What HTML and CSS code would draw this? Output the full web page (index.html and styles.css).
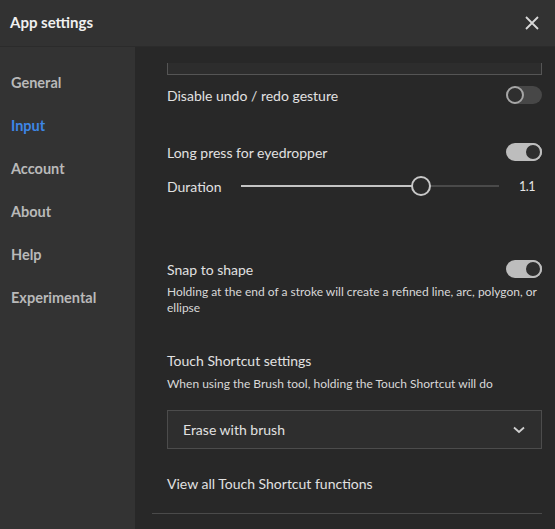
FILE: index.html
```html
<!DOCTYPE html>
<html lang="en">
<head>
    <meta charset="UTF-8">
    <title>App settings</title>
    <link rel="stylesheet" href="styles.css">
</head>
<body>
    <div class="dialog">
        <header class="dialog-header">
            <h1>App settings</h1>
            <button class="close-btn" aria-label="Close">
                <svg width="14" height="14" viewBox="0 0 14 14"><path d="M1 1 L13 13 M13 1 L1 13" stroke="#d8d8d8" stroke-width="1.8" fill="none"/></svg>
            </button>
        </header>

        <div class="dialog-body">
            <nav class="side-nav">
                <a class="nav-item">General</a>
                <a class="nav-item active">Input</a>
                <a class="nav-item">Account</a>
                <a class="nav-item">About</a>
                <a class="nav-item">Help</a>
                <a class="nav-item">Experimental</a>
            </nav>

            <main class="settings">
                <div class="clipped-field"></div>

                <div class="setting-row row-undo">
                    <span class="label">Disable undo / redo gesture</span>
                    <span class="toggle"></span>
                </div>

                <div class="setting-row row-eyedropper">
                    <span class="label">Long press for eyedropper</span>
                    <span class="toggle on"></span>
                </div>

                <div class="slider-row">
                    <span class="label">Duration</span>
                    <div class="slider">
                        <div class="slider-fill"></div>
                        <div class="slider-thumb"></div>
                    </div>
                    <span class="slider-value">1.1</span>
                </div>

                <div class="setting-row row-snap">
                    <span class="label">Snap to shape</span>
                    <span class="toggle on"></span>
                </div>
                <p class="description">Holding at the end of a stroke will create a refined line, arc, polygon, or ellipse</p>

                <div class="section-title">Touch Shortcut settings</div>
                <p class="description">When using the Brush tool, holding the Touch Shortcut will do</p>

                <div class="dropdown">
                    <span>Erase with brush</span>
                    <svg width="12" height="8" viewBox="0 0 12 8"><path d="M1 1.5 L6 6 L11 1.5" stroke="#d0d0d0" stroke-width="1.8" fill="none"/></svg>
                </div>

                <div class="link">View all Touch Shortcut functions</div>

                <hr class="divider">
            </main>
        </div>
    </div>
</body>
</html>
```

FILE: styles.css
```css
:root {
    --header-bg: #323232;
    --side-bg: #333333;
    --main-bg: #282828;
    --text: #e1e1e1;
    --text-muted: #b9b9b9;
    --accent: #3d86e6;
    --border: #4f4f4f;
    --font: "Lato", "Noto Sans", sans-serif;
}

html, body {
    margin: 0;
    height: 100%;
}

body {
    font-family: var(--font);
    background: var(--main-bg);
    color: var(--text);
    overflow: hidden;
}

.dialog {
    display: flex;
    flex-direction: column;
    height: 529px;
}

.dialog-header {
    height: 46px;
    background: var(--header-bg);
    border-bottom: 1px solid #2b2b2b;
    display: flex;
    align-items: center;
    justify-content: space-between;
    padding: 0 16px 0 10px;
    flex-shrink: 0;
}

.dialog-header h1 {
    margin: 0 0 2px;
    font-size: 15px;
    font-weight: 700;
    color: #f0f0f0;
}

.close-btn {
    background: none;
    border: none;
    padding: 0;
    width: 14px;
    height: 14px;
    display: flex;
}

.dialog-body {
    flex: 1;
    display: flex;
    min-height: 0;
}

/* left navigation */
.side-nav {
    width: 135px;
    background: var(--side-bg);
    display: flex;
    flex-direction: column;
    padding-top: 27px;
    flex-shrink: 0;
}

.nav-item {
    font-size: 14.5px;
    font-weight: 700;
    color: var(--text-muted);
    height: 43px;
    line-height: 18px;
    padding-left: 11px;
}

.nav-item.active {
    color: var(--accent);
}

/* settings list */
.settings {
    flex: 1;
    padding: 0 13px 0 32px;
    display: flex;
    flex-direction: column;
}

.clipped-field {
    margin-top: 16px;
    height: 11px;
    background: #2d2d2d;
    border: 1px solid #555;
    border-top: none;
}

.setting-row {
    display: flex;
    align-items: center;
    justify-content: space-between;
    height: 18px;
}

.row-undo { margin-top: 11px; }
.row-eyedropper { margin-top: 39px; }
.row-snap { margin-top: 64px; }

.label {
    font-size: 14px;
    color: var(--text);
}

.toggle {
    width: 36px;
    height: 18px;
    border-radius: 9px;
    background: #474747;
    position: relative;
    box-sizing: border-box;
}

.toggle::after {
    content: '';
    position: absolute;
    top: 0;
    left: 0;
    width: 18px;
    height: 18px;
    box-sizing: border-box;
    border-radius: 50%;
    border: 2px solid #a6a6a6;
    background: #2f2f2f;
}

.toggle.on {
    background: #bdbdbd;
}

.toggle.on::after {
    left: 18px;
    border-color: #bdbdbd;
    background: #2e2e2e;
}

.slider-row {
    display: flex;
    align-items: center;
    height: 20px;
    margin-top: 15px;
}

.slider-row .label {
    width: 74px;
}

.slider {
    position: relative;
    width: 258px;
    height: 2px;
    background: #4a4a4a;
}

.slider-fill {
    width: 180px;
    height: 2px;
    background: #c4c4c4;
}

.slider-thumb {
    position: absolute;
    left: 170px;
    top: -9px;
    width: 20px;
    height: 20px;
    box-sizing: border-box;
    border-radius: 50%;
    border: 2px solid #c8c8c8;
    background: #2a2a2a;
}

.slider-value {
    margin-left: 20px;
    font-size: 12.5px;
    letter-spacing: -0.5px;
    color: #e6e6e6;
}

.description {
    margin: 6px 0 0;
    font-size: 12px;
    line-height: 16px;
    color: #d8d8d8;
}

.section-title {
    margin-top: 36px;
    font-size: 14px;
    line-height: 18px;
}

.dropdown {
    margin-top: 18px;
    height: 37px;
    border: 1px solid #4c4c4c;
    background: #2e2e2e;
    display: flex;
    align-items: center;
    justify-content: space-between;
    padding: 0 16px 0 15px;
    font-size: 14px;
}

.link {
    margin-top: 26px;
    font-size: 14px;
    line-height: 18px;
}

.divider {
    margin: 20px 0 0 -15px;
    border: none;
    border-top: 1px solid #4a4a4a;
}
```
